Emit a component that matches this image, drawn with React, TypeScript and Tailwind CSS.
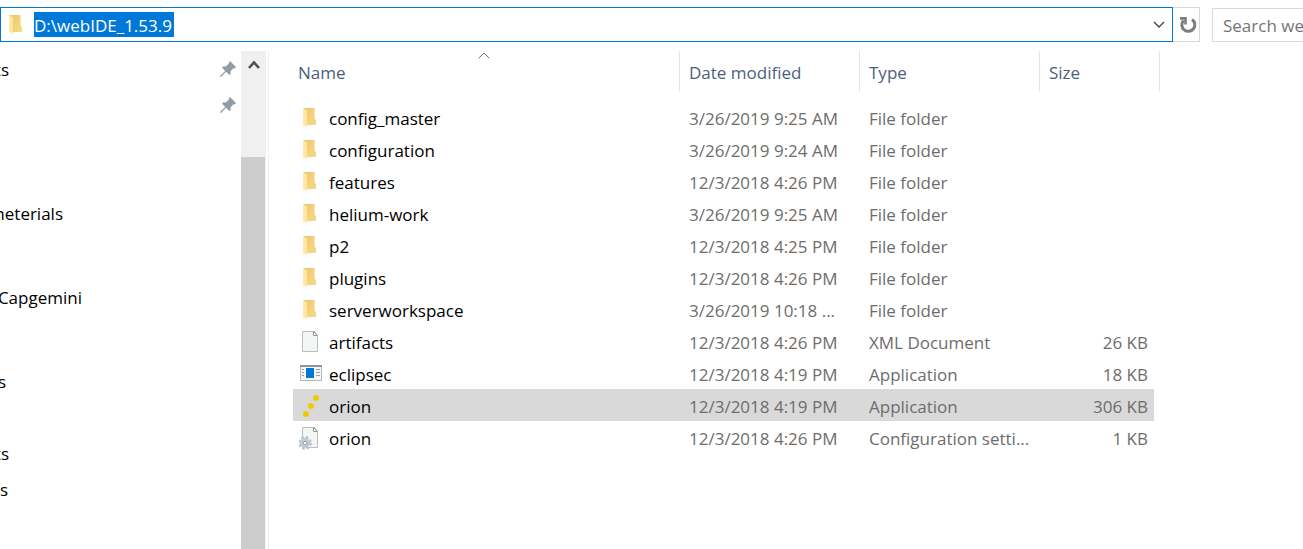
import clsx from "clsx";

type FileKind = "folder" | "document" | "console" | "orion" | "config";

type FileRow = {
  name: string;
  date: string;
  type: string;
  size?: string;
  kind: FileKind;
  selected?: boolean;
};

const files: FileRow[] = [
  { name: "config_master", date: "3/26/2019 9:25 AM", type: "File folder", kind: "folder" },
  { name: "configuration", date: "3/26/2019 9:24 AM", type: "File folder", kind: "folder" },
  { name: "features", date: "12/3/2018 4:26 PM", type: "File folder", kind: "folder" },
  { name: "helium-work", date: "3/26/2019 9:25 AM", type: "File folder", kind: "folder" },
  { name: "p2", date: "12/3/2018 4:25 PM", type: "File folder", kind: "folder" },
  { name: "plugins", date: "12/3/2018 4:26 PM", type: "File folder", kind: "folder" },
  { name: "serverworkspace", date: "3/26/2019 10:18 ...", type: "File folder", kind: "folder" },
  { name: "artifacts", date: "12/3/2018 4:26 PM", type: "XML Document", size: "26 KB", kind: "document" },
  { name: "eclipsec", date: "12/3/2018 4:19 PM", type: "Application", size: "18 KB", kind: "console" },
  { name: "orion", date: "12/3/2018 4:19 PM", type: "Application", size: "306 KB", kind: "orion", selected: true },
  { name: "orion", date: "12/3/2018 4:26 PM", type: "Configuration setti...", size: "1 KB", kind: "config" },
];

// The pane is scrolled sideways, so only the end of each label shows.
const navGroups: { label?: string; width?: string; pinned?: boolean }[][] = [
  [
    { label: "ts", width: "w-[9px]", pinned: true },
    { pinned: true },
    {},
    {},
    { label: "meterials", width: "w-[63px]" },
    {},
  ],
  [{ label: "Capgemini", width: "w-[82px]" }, {}],
  [
    { label: "s", width: "w-[6px]" },
    {},
    { label: "ts", width: "w-[9px]" },
    { label: "s", width: "w-[8px]" },
  ],
];

function FolderIcon() {
  return (
    <svg width="15" height="22" viewBox="0 0 15 22" aria-hidden="true">
      <defs>
        <linearGradient id="folder-back" x1="0" y1="0" x2="1" y2="1">
          <stop offset="0" stopColor="#ecc868" />
          <stop offset="1" stopColor="#f7da87" />
        </linearGradient>
      </defs>
      <path d="M1 1h11.500v10.500l1.500 1.500v5H4z" fill="url(#folder-back)" />
      <path d="M1 1l4 2.500v17L1 18z" fill="#ffe8a6" />
    </svg>
  );
}

function Page() {
  return (
    <>
      <path d="M3.500 1.500h12l3 4v16h-15z" fill="#f4f5f5" stroke="#bdbdbd" />
      <path d="M14.500 1.500v4h4z" fill="#fff" stroke="#969696" />
    </>
  );
}

function FileIcon({ kind }: { kind: FileKind }) {
  if (kind === "folder") return <FolderIcon />;
  return (
    <svg width="24" height="24" viewBox="0 0 24 24" aria-hidden="true">
      {kind === "document" && <Page />}
      {kind === "console" && (
        <>
          <path d="M1.500 3.500h21v15h-21z" fill="#f4f5f6" stroke="#b3b8bc" />
          <path d="M1 3h22v2H1z" fill="#8c959c" />
          <path d="M7 6h8v10H7z" fill="#0078d7" />
          <path d="M3 7.500h2M3 10.500h2M3 13.500h2M17 7.500h4M17 10.500h4M17 13.500h4" stroke="#9b9b9b" />
        </>
      )}
      {kind === "orion" && (
        <g fill="#f0cb00">
          <circle cx="17" cy="4" r="3" />
          <circle cx="12" cy="12" r="3" />
          <circle cx="7" cy="20" r="3" />
        </g>
      )}
      {kind === "config" && (
        <>
          <Page />
          <circle cx="6" cy="17" r="5.400" fill="none" stroke="#b4c0c9" strokeWidth="2.800" strokeDasharray="2.500 1.740" />
          <circle cx="6" cy="17" r="3.600" fill="#e9eef1" stroke="#c0cbd3" strokeWidth="2.800" />
          <circle cx="6" cy="17" r="1.800" fill="#fff" stroke="#8b9ba8" />
        </>
      )}
    </svg>
  );
}

function PinIcon() {
  return (
    <svg width="16" height="16" viewBox="0 0 16 16" className="shrink-0" aria-hidden="true">
      <path d="M10 0l6 6-1.500 1.500-1-.2-3 3 .3 2.200L9.500 14 6 10.700 1.200 15.800 0 16l.2-1.200L5.200 10 2 6.500 3.500 5.200l2.300.3 3.400-3.200L9 1z" fill="#929ca5" />
    </svg>
  );
}

function AddressBar() {
  return (
    <header className="flex pt-[7px]">
      <div className="flex h-[35px] flex-1 items-center border border-[#0078d7] pl-[7px]">
        <FolderIcon />
        <input
          aria-label="Address"
          defaultValue="D:\webIDE_1.53.9"
          className="ml-[11px] h-[25px] w-[140px] bg-[#0078d7] pt-px text-white outline-none"
        />
        <button aria-label="Previous locations" className="ml-auto mr-[6px]">
          <svg width="14" height="8" viewBox="0 0 14 8" fill="none" stroke="#404040" strokeWidth="1.300">
            <path d="M2 1l5 5 5-5" />
          </svg>
        </button>
      </div>
      <button aria-label="Refresh" className="flex h-[35px] w-[27px] items-center justify-center border border-l-0 border-[#d9d9d9] pl-1">
        <svg width="18" height="18" viewBox="0 0 18 18" fill="none" stroke="#7d7d7d" strokeWidth="3">
          <path d="M13 3.500A6.500 6.500 0 1 1 4.500 4.500" />
          <path d="M1 2.400h5.500v6" strokeWidth="2.600" />
        </svg>
      </button>
      <input
        aria-label="Search"
        placeholder="Search we"
        className="mt-px ml-3 h-[34px] w-[91px] border border-r-0 border-[#d9d9d9] pl-[10px] outline-none placeholder:text-[#757575]"
      />
    </header>
  );
}

function NavPane() {
  return (
    <nav className="flex w-[241px] shrink-0 flex-col gap-3 overflow-hidden">
      {navGroups.map((group, i) => (
        <ul key={i}>
          {group.map((item, j) => (
            <li key={j} className="flex h-9 items-center justify-between pr-[5px]">
              <span className={clsx("flex justify-end overflow-hidden pt-0.5", item.width)}>{item.label}</span>
              {item.pinned && <PinIcon />}
            </li>
          ))}
        </ul>
      ))}
    </nav>
  );
}

function FileTable() {
  return (
    <table className="ml-6 w-[867px] table-fixed border-separate border-spacing-0 self-start text-left">
      <colgroup>
        <col className="w-[387px]" />
        <col className="w-[180px]" />
        <col className="w-[180px]" />
        <col className="w-[114px]" />
        <col className="w-[6px]" />
      </colgroup>
      <thead className="text-[#4c607a]">
        <tr className="h-[41px]">
          <th className="relative border-r border-[#e5e5e5] pt-0.5 pl-[5px] font-normal">
            Name
            <svg width="12" height="7" viewBox="0 0 12 7" fill="none" stroke="#666" className="absolute top-px left-[185px]" aria-hidden="true">
              <path d="M.7 6.200L6 1l5.300 5.200" />
            </svg>
          </th>
          <th className="border-r border-[#e5e5e5] pt-0.5 pl-[9px] font-normal">Date modified</th>
          <th className="border-r border-[#e5e5e5] pt-0.5 pl-[9px] font-normal">Type</th>
          <th colSpan={2} className="border-r border-[#e5e5e5] pt-0.5 pl-[9px] font-normal">Size</th>
        </tr>
      </thead>
      <tbody className="text-[#6d6d6d]">
        <tr className="h-[9px]" aria-hidden="true">
          <td colSpan={5} className="p-0" />
        </tr>
        {files.map((file, i) => {
          const cell = file.selected ? "bg-[#d9d9d9]" : "";
          return (
            <tr key={i} className="h-8 whitespace-nowrap">
              <td className={clsx("p-0", cell)}>
                <div className="flex items-center text-black">
                  <span className={clsx("flex w-9 pt-0.5", file.kind === "folder" ? "pl-[9px]" : "pl-[6px]")}>
                    <FileIcon kind={file.kind} />
                  </span>
                  <span className="pt-1">{file.name}</span>
                </div>
              </td>
              <td className={clsx("pt-1 pl-[9px]", cell)}>{file.date}</td>
              <td className={clsx("pt-1 pl-[9px]", cell)}>{file.type}</td>
              <td className={clsx("pt-1 pr-[6px] text-right", cell)}>{file.size}</td>
              <td />
            </tr>
          );
        })}
      </tbody>
    </table>
  );
}

export default function App() {
  return (
    <div className="flex h-screen flex-col overflow-hidden bg-white font-['Open_Sans',sans-serif] text-[17px] leading-6 text-black">
      <AddressBar />
      <main className="flex min-h-0 flex-1 pt-[9px]">
        <NavPane />
        <div className="flex w-[25px] shrink-0 flex-col bg-[#f0f0f0]">
          <button aria-label="Scroll up" className="flex h-[106px] justify-center pt-[9px]">
            <svg width="12" height="10" viewBox="0 0 12 10" fill="none" stroke="#505050" strokeWidth="2.600">
              <path d="M1 8l5-5.500L11 8" />
            </svg>
          </button>
          <div className="w-6 flex-1 bg-[#cdcdcd]" />
        </div>
        <div className="ml-[2px] w-px shrink-0 bg-[#f0f0f0]" />
        <FileTable />
      </main>
    </div>
  );
}
